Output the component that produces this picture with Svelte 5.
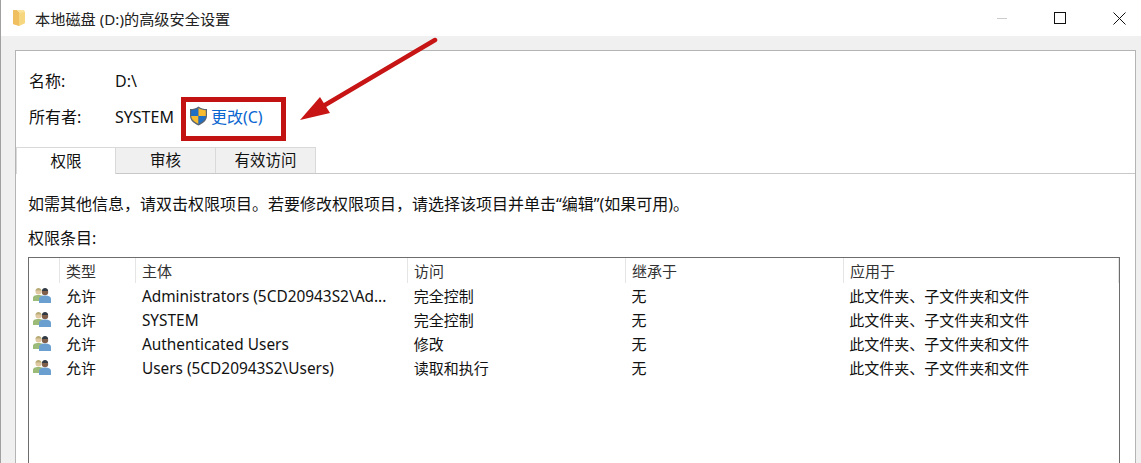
<script>
  const columns = [
    { name: '', width: 32 },
    { name: '类型', width: 76 },
    { name: '主体', width: 272 },
    { name: '访问', width: 218 },
    { name: '继承于', width: 218 },
    { name: '应用于', width: 275 }
  ];

  const rows = [
    { who: 'Administrators (5CD20943S2\\Ad...', access: '完全控制' },
    { who: 'SYSTEM', access: '完全控制' },
    { who: 'Authenticated Users', access: '修改' },
    { who: 'Users (5CD20943S2\\Users)', access: '读取和执行' }
  ];
</script>

<div class="window">
  <header class="titlebar">
    <svg class="folder" width="13" height="18" viewBox="0 0 13 18">
      <path d="M0 1h4l2 2v14l-5-1.500L0 15z" fill="#f0c060" />
      <path d="M4 1h7l1 2v11l-6 3V3z" fill="#fbe29a" />
      <path d="M6 4l6-1v11l-6 3z" fill="#f7d680" />
    </svg>
    <span class="title">本地磁盘 (D:)的高级安全设置</span>
    <span class="spacer"></span>
    <span class="winbtn"><span class="dash"></span></span>
    <span class="winbtn"><span class="square"></span></span>
    <span class="winbtn">
      <svg width="13" height="13" viewBox="0 0 13 13"><path d="M.500.500l12 12M12.500.500l-12 12" stroke="#111" fill="none" /></svg>
    </span>
  </header>

  <main class="panel">
    <div class="info">
      <div class="info-row">
        <span class="label">名称:</span>
        <span class="latin">D:\</span>
      </div>
      <div class="info-row owner">
        <span class="label">所有者:</span>
        <span class="latin">SYSTEM</span>
        <span class="change">
          <svg width="19" height="20" viewBox="0 0 19 20">
            <path d="M9.500.500C7 2.500 4.500 3 1 3v7c0 4.500 4 7.500 8.500 9.500 4.500-2 8.500-5 8.500-9.500V3C14.500 3 12 2.500 9.500.500z" fill="#5b6570" />
            <path d="M9.500 2v8H2.200V4.200C5 4.100 7.500 3.500 9.500 2z" fill="#1f6fc4" />
            <path d="M9.500 2c2 1.500 4.500 2.100 7.300 2.200V10H9.500z" fill="#f6bb2e" />
            <path d="M2.200 10h7.300v7.900C6 16.200 2.500 14 2.200 10z" fill="#f6bb2e" />
            <path d="M9.500 10h7.300c-.300 4-3.800 6.200-7.300 7.900z" fill="#1f6fc4" />
          </svg>
          <a href="#change">更改(C)</a>
        </span>
      </div>
    </div>

    <nav class="tabs">
      <span class="tab active">权限</span>
      <span class="tab">审核</span>
      <span class="tab">有效访问</span>
    </nav>

    <div class="body">
      <p class="hint">如需其他信息，请双击权限项目。若要修改权限项目，请选择该项目并单击“编辑”(如果可用)。</p>
      <p class="list-label">权限条目:</p>

      <div class="list">
        <div class="list-head">
          {#each columns as col}
            <span class="head-cell" style="width: {col.width}px">{col.name}</span>
          {/each}
        </div>
        {#each rows as row}
          <div class="list-row">
            <span class="cell icon-cell" style="width: {columns[0].width}px">
              <svg width="18" height="15" viewBox="0 0 18 15">
                <circle cx="5.500" cy="3.500" r="3" fill="#e0c8a0" />
                <path d="M2.500 3c0-2 1.500-3 3-3s3 1 3 3l-1-.500h-4z" fill="#b8ad78" />
                <path d="M0 13V10c0-2 1.500-3 5.500-3s5 1 5 3v3z" fill="#9dbb78" />
                <circle cx="12" cy="4" r="3.200" fill="#80604a" />
                <path d="M9 3c0-2 1.500-3 3-3s3 1 3 3z" fill="#2f3a44" />
                <path d="M6 15v-4c0-2 2-3.500 6-3.500s6 1.500 6 3.500v4z" fill="#6a9fd0" />
              </svg>
            </span>
            <span class="cell" style="width: {columns[1].width}px">允许</span>
            <span class="cell who" style="width: {columns[2].width}px">{row.who}</span>
            <span class="cell" style="width: {columns[3].width}px">{row.access}</span>
            <span class="cell" style="width: {columns[4].width}px">无</span>
            <span class="cell" style="width: {columns[5].width}px">此文件夹、子文件夹和文件</span>
          </div>
        {/each}
      </div>
    </div>
  </main>

  <!-- annotation drawn on top of the screenshot -->
  <div class="callout"></div>
  <svg class="arrow" width="150" height="90" viewBox="0 0 150 90">
    <path d="M136 3L26 68" stroke="#c71414" stroke-width="4.500" stroke-linecap="round" fill="none" />
    <path d="M1 83L21 60l10 16z" fill="#c71414" />
  </svg>
</div>

<style>
  :global(body) {
    margin: 0;
    background: #f0f0f0;
    overflow: hidden;
  }
  .window {
    position: relative;
    width: 1141px;
    height: 463px;
    box-sizing: border-box;
    border-left: 1px solid #a0a0a0;
    background: #f0f0f0;
    color: #111;
    font-family: "Noto Sans", "Noto Sans CJK SC", sans-serif;
    font-size: 15px;
    overflow: hidden;
  }
  .titlebar {
    display: flex;
    align-items: center;
    height: 36px;
    background: #fff;
    padding-left: 12px;
  }
  .folder {
    margin-right: 9px;
  }
  .title {
    color: #222;
    font-size: 15.200px;
  }
  .spacer {
    flex: 1;
  }
  .winbtn {
    display: flex;
    align-items: center;
    justify-content: center;
    width: 59px;
    height: 36px;
  }
  .winbtn:last-child {
    width: 44px;
  }
  .dash {
    width: 10px;
    height: 1px;
    background: #ccc;
    margin-right: 14px;
  }
  .square {
    width: 10px;
    height: 10px;
    border: 1px solid #111;
    margin-right: 16px;
  }
  .panel {
    margin: 14px 5px 0 14px;
    height: 420px;
    background: #fff;
    border: 1px solid #b4b4b4;
    border-bottom: none;
  }
  .info {
    padding: 17px 0 0 13px;
  }
  .info-row {
    display: flex;
    align-items: center;
    height: 24px;
    margin-bottom: 12px;
    font-size: 16px;
  }
  .info-row.owner {
    margin-bottom: 0;
  }
  .latin {
    padding-top: 2px;
  }
  .label {
    width: 86px;
  }
  .change {
    display: flex;
    align-items: center;
    gap: 3px;
    margin-left: 15px;
  }
  .change a {
    color: #0a66d0;
    text-decoration: none;
  }
  .tabs {
    display: flex;
    margin-top: 19px;
    height: 26px;
    border-bottom: 1px solid #c8c8c8;
  }
  .tab {
    display: flex;
    align-items: center;
    justify-content: center;
    width: 100px;
    height: 26px;
    box-sizing: border-box;
    background: #f0f0f0;
    border: 1px solid #d9d9d9;
    border-left: none;
    border-bottom: none;
    padding-bottom: 2px;
    font-size: 15.500px;
  }
  .tab.active {
    background: #fff;
    border-left: 1px solid #d9d9d9;
    height: 27px;
    position: relative;
    z-index: 1;
  }
  .body {
    padding: 0 15px 0 12px;
  }
  .hint {
    margin: 20px 0 0;
    font-size: 16px;
    line-height: 20px;
    white-space: nowrap;
  }
  .list-label {
    margin: 14px 0 0;
    font-size: 16px;
    line-height: 20px;
  }
  .list {
    margin-top: 9px;
    width: 1092px;
    height: 210px;
    box-sizing: border-box;
    background: #fff;
    border: 1px solid #6d6d6d;
    overflow: hidden;
  }
  .list-head {
    display: flex;
    height: 25px;
    line-height: 26px;
    margin-left: -1px;
  }
  .head-cell {
    box-sizing: border-box;
    padding-left: 6px;
    color: #333;
    border-right: 1px solid #e5e5e5;
  }
  .list-row {
    display: flex;
    align-items: center;
    height: 24px;
  }
  .cell {
    box-sizing: border-box;
    padding-left: 5px;
    white-space: nowrap;
  }
  .who {
    font-size: 15.400px;
    padding-top: 2px;
  }
  .icon-cell {
    display: flex;
    align-items: center;
    padding-left: 4px;
  }
  .callout {
    position: absolute;
    left: 180px;
    top: 97px;
    width: 95px;
    height: 34px;
    border: 5px solid #c21212;
  }
  .arrow {
    position: absolute;
    left: 298px;
    top: 37px;
  }
</style>
